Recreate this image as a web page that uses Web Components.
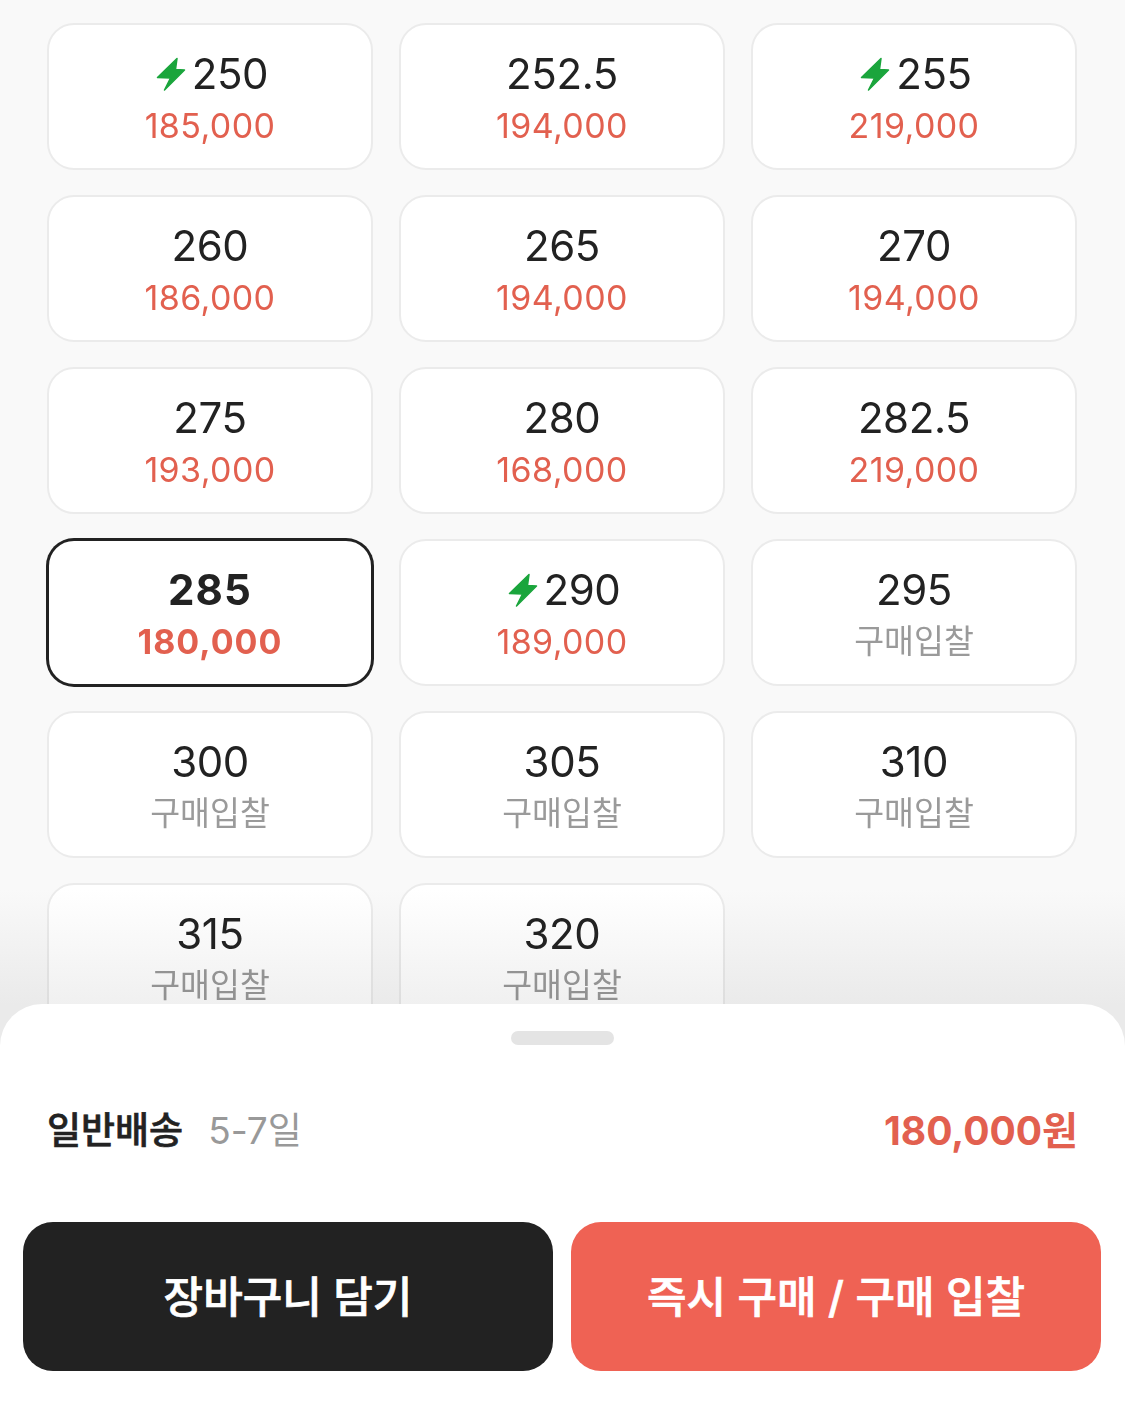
<!doctype html>
<html lang="ko">
<head>
<meta charset="utf-8">
<title>size picker</title>
<style>
html,body{margin:0;padding:0;background:#f9f9f9}
body{font-family:Inter,"Noto Sans CJK KR",sans-serif;color:#222}
</style>
</head>
<body>
<size-sheet>
  <size-cell fast price="185,000">250</size-cell>
  <size-cell price="194,000">252.5</size-cell>
  <size-cell fast price="219,000">255</size-cell>
  <size-cell price="186,000">260</size-cell>
  <size-cell price="194,000">265</size-cell>
  <size-cell price="194,000">270</size-cell>
  <size-cell price="193,000">275</size-cell>
  <size-cell price="168,000">280</size-cell>
  <size-cell price="219,000">282.5</size-cell>
  <size-cell selected price="180,000">285</size-cell>
  <size-cell fast price="189,000">290</size-cell>
  <size-cell>295</size-cell>
  <size-cell>300</size-cell>
  <size-cell>305</size-cell>
  <size-cell>310</size-cell>
  <size-cell>315</size-cell>
  <size-cell>320</size-cell>
  <buy-bar slot="bar" label="일반배송" eta="5-7일" total="180,000원">
    <buy-button>장바구니 담기</buy-button>
    <buy-button accent>즉시 구매 / 구매 입찰</buy-button>
  </buy-bar>
</size-sheet>
<script>
class SizeSheet extends HTMLElement{
  constructor(){
    super();
    this.attachShadow({mode:'open'}).innerHTML=`
<style>
:host{display:block;position:relative;width:1125px;height:1408px;overflow:hidden;background:#f9f9f9}
.grid{display:grid;grid-template-columns:repeat(3,326px);grid-auto-rows:147px;gap:25px 26px;padding:23px 48px 0 47px}
.fade{position:absolute;left:0;right:0;top:890px;height:160px;background:linear-gradient(#fff,#f0f0f0 72%);mix-blend-mode:multiply;pointer-events:none}
</style>
<div class="grid"><slot></slot></div>
<div class="fade"></div>
<slot name="bar"></slot>`;
  }
}

class SizeCell extends HTMLElement{
  connectedCallback(){
    if(this.shadowRoot) return;
    const price=this.getAttribute('price');
    const bolt=this.hasAttribute('fast')?'<svg viewBox="0 0 30 34" width="30" height="34"><path fill="#1aa53c" stroke="#1aa53c" stroke-width="1.500" stroke-linejoin="round" d="M21 1.500 1.500 20.500 14.500 21 8.500 33 28.500 13 19.500 12.500z"/></svg>':'';
    this.attachShadow({mode:'open'}).innerHTML=`
<style>
:host{display:flex;flex-direction:column;align-items:center;box-sizing:border-box;padding-top:23px;background:#fff;border:2px solid #ebebeb;border-radius:27px;color:#222}
:host([selected]){border-color:#222;box-shadow:0 0 0 1px #222;font-weight:700}
.size{display:flex;align-items:center;gap:6px;height:51px;margin-bottom:1px;font-size:42px;letter-spacing:-.4px}
:host([fast]) .size{padding-left:4px}
:host([selected]) .size{letter-spacing:1.200px}
.price{height:52px;line-height:52px;font-size:34px;color:#e2604f;letter-spacing:.4px}
:host([selected]) .price{letter-spacing:1px}
.bid{height:52px;line-height:51px;font-size:32.500px;color:#9a9a9a}
svg{display:block}
</style>
<div class="size">${bolt}<span><slot></slot></span></div>
${price?`<div class="price">${price}</div>`:'<div class="bid">구매입찰</div>'}`;
  }
}

class BuyBar extends HTMLElement{
  connectedCallback(){
    if(this.shadowRoot) return;
    this.attachShadow({mode:'open'}).innerHTML=`
<style>
:host{display:block;position:absolute;left:0;right:0;top:1004px;bottom:0;background:#fff;border-radius:42px 42px 0 0}
.handle{width:103px;height:14px;margin:27px auto 0;border-radius:7px;background:#e4e4e4}
.info{display:flex;align-items:center;height:56px;margin-top:55px;padding:0 47px}
.label{font-size:37px;font-weight:500;-webkit-text-stroke:.6px #222;color:#222}
.eta{margin-left:25px;font-size:37px;color:#999}
.total{margin-left:auto;font-size:39px;font-weight:700;color:#e2604f}
.actions{display:grid;grid-template-columns:530px 530px;gap:18px;padding:0 24px 0 23px;margin-top:66px}
</style>
<div class="handle"></div>
<div class="info">
  <span class="label">${this.getAttribute('label')}</span>
  <span class="eta">${this.getAttribute('eta')}</span>
  <span class="total">${this.getAttribute('total')}</span>
</div>
<div class="actions"><slot></slot></div>`;
  }
}

class BuyButton extends HTMLElement{
  constructor(){
    super();
    this.attachShadow({mode:'open'}).innerHTML=`
<style>
:host{display:flex;align-items:center;justify-content:center;box-sizing:border-box;height:149px;padding-bottom:6px;border-radius:30px;background:#222;color:#fff;font-size:43px;font-weight:500;-webkit-text-stroke:.7px #fff}
:host([accent]){background:#ef6254}
</style>
<slot></slot>`;
  }
}

customElements.define('size-sheet',SizeSheet);
customElements.define('size-cell',SizeCell);
customElements.define('buy-bar',BuyBar);
customElements.define('buy-button',BuyButton);
</script>
</body>
</html>
